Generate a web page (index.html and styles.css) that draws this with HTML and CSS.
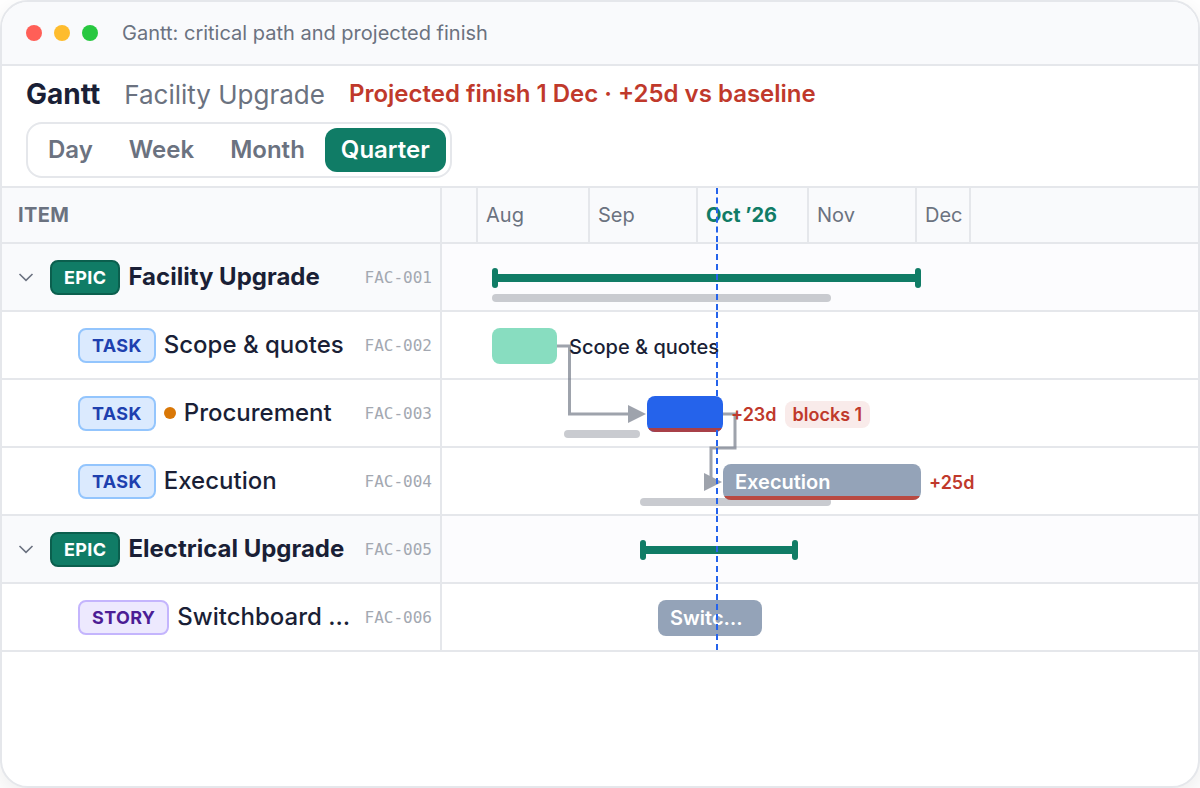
FILE: index.html
```html
<!DOCTYPE html>
<html lang="en">
<head>
<meta charset="utf-8">
<meta name="viewport" content="width=device-width, initial-scale=1">
<title>Gantt: critical path and projected finish</title>
<link rel="stylesheet" href="styles.css">
</head>
<body>
<div class="window">
  <header class="titlebar">
    <span class="light light-close"></span>
    <span class="light light-min"></span>
    <span class="light light-max"></span>
    <span class="titlebar-text">Gantt: critical path and projected finish</span>
  </header>

  <section class="toolbar">
    <div class="heading">
      <h1 class="heading-title">Gantt</h1>
      <span class="heading-project">Facility Upgrade</span>
      <span class="heading-forecast">Projected finish 1 Dec · +25d vs baseline</span>
    </div>
    <div class="segmented">
      <button class="segment" type="button">Day</button>
      <button class="segment" type="button">Week</button>
      <button class="segment" type="button">Month</button>
      <button class="segment segment-active" type="button" aria-pressed="true">Quarter</button>
    </div>
  </section>

  <main class="gantt">
    <div class="row row-head">
      <div class="item item-head">ITEM</div>
      <div class="track months">
        <span class="month" style="width:36px"></span>
        <span class="month" style="width:112px">Aug</span>
        <span class="month" style="width:108px">Sep</span>
        <span class="month month-current" style="width:111px">Oct ’26</span>
        <span class="month" style="width:108px">Nov</span>
        <span class="month" style="width:54px">Dec</span>
        <i class="today" style="left:274px"></i>
      </div>
    </div>

    <div class="rows">
      <div class="row row-epic">
        <div class="item">
          <button class="toggle" type="button" aria-label="Collapse Facility Upgrade"><svg class="chevron" viewBox="0 0 16 16"><path d="M1.500 5 8 11.300 14.500 5"/></svg></button>
          <span class="badge badge-epic">EPIC</span>
          <span class="name">Facility Upgrade</span>
          <span class="code">FAC-001</span>
        </div>
        <div class="track">
          <div class="baseline" style="left:50px;width:339px"></div>
          <div class="summary" style="left:50px;width:429px"></div>
          <i class="today" style="left:274px"></i>
        </div>
      </div>

      <div class="row">
        <div class="item item-child">
          <span class="badge badge-task">TASK</span>
          <span class="name">Scope &amp; quotes</span>
          <span class="code">FAC-002</span>
        </div>
        <div class="track">
          <div class="bar bar-done" style="left:50px;width:65px"></div>
          <div class="after" style="left:127px"><span class="after-name">Scope &amp; quotes</span></div>
          <i class="today" style="left:274px"></i>
        </div>
      </div>

      <div class="row">
        <div class="item item-child">
          <span class="badge badge-task">TASK</span>
          <span class="dot"></span>
          <span class="name">Procurement</span>
          <span class="code">FAC-003</span>
        </div>
        <div class="track">
          <div class="baseline" style="left:122px;width:76px"></div>
          <div class="bar bar-active bar-critical" style="left:205px;width:76px"></div>
          <div class="after" style="left:289px"><span class="slip">+23d</span><span class="blocks">blocks 1</span></div>
          <i class="today" style="left:274px"></i>
        </div>
      </div>

      <div class="row">
        <div class="item item-child">
          <span class="badge badge-task">TASK</span>
          <span class="name">Execution</span>
          <span class="code">FAC-004</span>
        </div>
        <div class="track">
          <div class="baseline" style="left:198px;width:191px"></div>
          <div class="bar bar-planned bar-critical" style="left:281px;width:198px">Execution</div>
          <div class="after" style="left:487px"><span class="slip">+25d</span></div>
          <i class="today" style="left:274px"></i>
        </div>
      </div>

      <div class="row row-epic">
        <div class="item">
          <button class="toggle" type="button" aria-label="Collapse Electrical Upgrade"><svg class="chevron" viewBox="0 0 16 16"><path d="M1.500 5 8 11.300 14.500 5"/></svg></button>
          <span class="badge badge-epic">EPIC</span>
          <span class="name">Electrical Upgrade</span>
          <span class="code">FAC-005</span>
        </div>
        <div class="track">
          <div class="summary" style="left:198px;width:158px"></div>
          <i class="today" style="left:274px"></i>
        </div>
      </div>

      <div class="row">
        <div class="item item-child">
          <span class="badge badge-story">STORY</span>
          <span class="name">Switchboard …</span>
          <span class="code">FAC-006</span>
        </div>
        <div class="track">
          <div class="bar bar-planned" style="left:216px;width:104px">Switc…</div>
          <i class="today" style="left:274px"></i>
        </div>
      </div>

      <svg class="links" aria-hidden="true">
        <g opacity=".65">
          <path class="link" d="M115 102h12.500v68h60"/>
          <path class="link-head" d="M186 161l18 9-18 9z"/>
        </g>
        <g opacity=".65">
          <path class="link" d="M281 170h12v34h-24v30"/>
          <path class="link-head" d="M262 229l18 9-18 9z"/>
        </g>
      </svg>
    </div>
  </main>
</div>
</body>
</html>
```

FILE: styles.css
```css
:root {
  --line: #e5e7eb;
  --panel: #f9fafc;
  --ink: #1a1f36;
  --muted: #6b7280;
  --green: #107c66;
  --red: #c0392b;
  --blue: #2563eb;
}

* { box-sizing: border-box; }

body {
  margin: 0;
  background: #fff;
  color: var(--ink);
  font-family: Inter, "Liberation Sans", sans-serif;
}

button {
  margin: 0;
  border: 0;
  background: none;
  color: inherit;
  font: inherit;
}

.window {
  min-height: 100vh;
  overflow: hidden;
  border: 2px solid var(--line);
  border-radius: 28px;
  background: #fff;
  box-shadow: 0 8px 24px rgba(0, 0, 0, .08);
}

/* Title bar */
.titlebar {
  display: flex;
  align-items: center;
  gap: 12px;
  height: 64px;
  padding: 0 24px;
  border-bottom: 2px solid var(--line);
  background: var(--panel);
}
.light { width: 16px; height: 16px; border-radius: 50%; }
.light-close { background: #ff5f57; }
.light-min { background: #febc2e; }
.light-max { background: #28c840; }
.titlebar-text { margin-left: 12px; color: var(--muted); font-size: 20px; }

/* Toolbar */
.toolbar {
  display: flex;
  flex-direction: column;
  align-items: flex-start;
  gap: 8px;
  padding: 8px 24px;
  border-bottom: 2px solid var(--line);
}
.heading { display: flex; align-items: center; gap: 24px; height: 40px; }
.heading-title { margin: 0; font-size: 28px; font-weight: 700; line-height: 40px; }
.heading-project { color: var(--muted); font-size: 26px; line-height: 38px; padding-top: 2px; }
.heading-forecast { color: var(--red); font-size: 24px; font-weight: 600; line-height: 40px; }
.segmented {
  display: flex;
  gap: 4px;
  padding: 4px;
  border: 2px solid var(--line);
  border-radius: 16px;
}
.segment {
  padding: 0 16px;
  border-radius: 12px;
  color: var(--muted);
  font-size: 24px;
  font-weight: 600;
  line-height: 44px;
}
.segment-active { background: var(--green); color: #fff; }

/* Grid */
.row {
  display: grid;
  grid-template-columns: 440px 1fr;
  height: 68px;
  border-bottom: 2px solid var(--line);
}
.row-head { height: 56px; background: var(--panel); }
.row-epic { background: #fcfcfe; }
.row-epic .item { background: var(--panel); }
.rows { position: relative; }
.item {
  display: flex;
  align-items: center;
  gap: 8px;
  min-width: 0;
  padding: 0 8px;
  border-right: 2px solid var(--line);
}
.item-child { padding-left: 76px; }
.item-head {
  padding-left: 16px;
  color: var(--muted);
  font-size: 20px;
  font-weight: 700;
  letter-spacing: .02em;
}
.toggle { width: 32px; height: 32px; padding: 8px; }
.chevron {
  display: block;
  width: 16px;
  height: 16px;
  fill: none;
  stroke: var(--muted);
  stroke-width: 1.6;
}
.badge {
  padding: 0 12px;
  border: 2px solid;
  border-radius: 8px;
  font-size: 18px;
  font-weight: 700;
  line-height: 31px;
  letter-spacing: .02em;
}
.badge-epic { border-color: #0b5f4e; background: var(--green); color: #fff; }
.badge-task { border-color: #93c5fd; background: #dbeafe; color: #1e40af; }
.badge-story { border-color: #c4b5fd; background: #ede9fe; color: #4c1d95; }
.dot { width: 12px; height: 12px; border-radius: 50%; background: #d97706; }
.name {
  flex: 1;
  min-width: 0;
  font-size: 24px;
  font-weight: 500;
  line-height: 32px;
  white-space: nowrap;
}
.row-epic .name { font-weight: 700; }
.code {
  color: #a3a8b1;
  font-family: "DejaVu Sans Mono", monospace;
  font-size: 16px;
}

/* Timeline */
.track { position: relative; min-width: 0; }
.months { display: flex; }
.month {
  flex: none;
  padding-left: 8px;
  border-right: 2px solid var(--line);
  color: var(--muted);
  font-size: 20px;
  line-height: 54px;
}
.month-current { color: var(--green); font-weight: 700; }
.today {
  position: absolute;
  z-index: 3;
  top: 0;
  bottom: 0;
  border-left: 2px dashed var(--blue);
}
.bar {
  position: absolute;
  top: 16px;
  height: 36px;
  padding: 0 12px;
  overflow: hidden;
  border-radius: 8px;
  color: #fff;
  font-size: 20px;
  font-weight: 600;
  line-height: 36px;
  white-space: nowrap;
}
.bar-done { background: #88ddc0; }
.bar-active { background: var(--blue); }
.bar-planned { background: #94a3b8; }
.bar-critical::after {
  content: "";
  position: absolute;
  right: 0;
  bottom: 0;
  left: 0;
  height: 4px;
  background: var(--red);
  opacity: .85;
}
.baseline {
  position: absolute;
  top: 50px;
  height: 8px;
  border-radius: 4px;
  background: #c9cbd0;
}
.summary { position: absolute; top: 30px; height: 8px; background: var(--green); }
.summary::before,
.summary::after {
  content: "";
  position: absolute;
  top: -6px;
  width: 6px;
  height: 20px;
  border-radius: 3px;
  background: var(--green);
}
.summary::before { left: 0; }
.summary::after { right: 0; }
.after {
  position: absolute;
  z-index: 2;
  top: 16px;
  display: flex;
  align-items: center;
  gap: 8px;
  height: 36px;
  white-space: nowrap;
}
.after-name { font-size: 20px; font-weight: 500; line-height: 38px; padding-top: 2px; }
.slip { color: var(--red); font-size: 18px; font-weight: 600; }
.blocks {
  padding: 0 8px;
  border-radius: 8px;
  background: #f9ebea;
  color: var(--red);
  font-size: 18px;
  font-weight: 600;
  line-height: 27px;
}
.links {
  position: absolute;
  z-index: 1;
  top: 0;
  left: 440px;
  width: calc(100% - 440px);
  height: 100%;
  pointer-events: none;
}
.link { fill: none; stroke: var(--muted); stroke-width: 3; }
.link-head { fill: var(--muted); }
```
